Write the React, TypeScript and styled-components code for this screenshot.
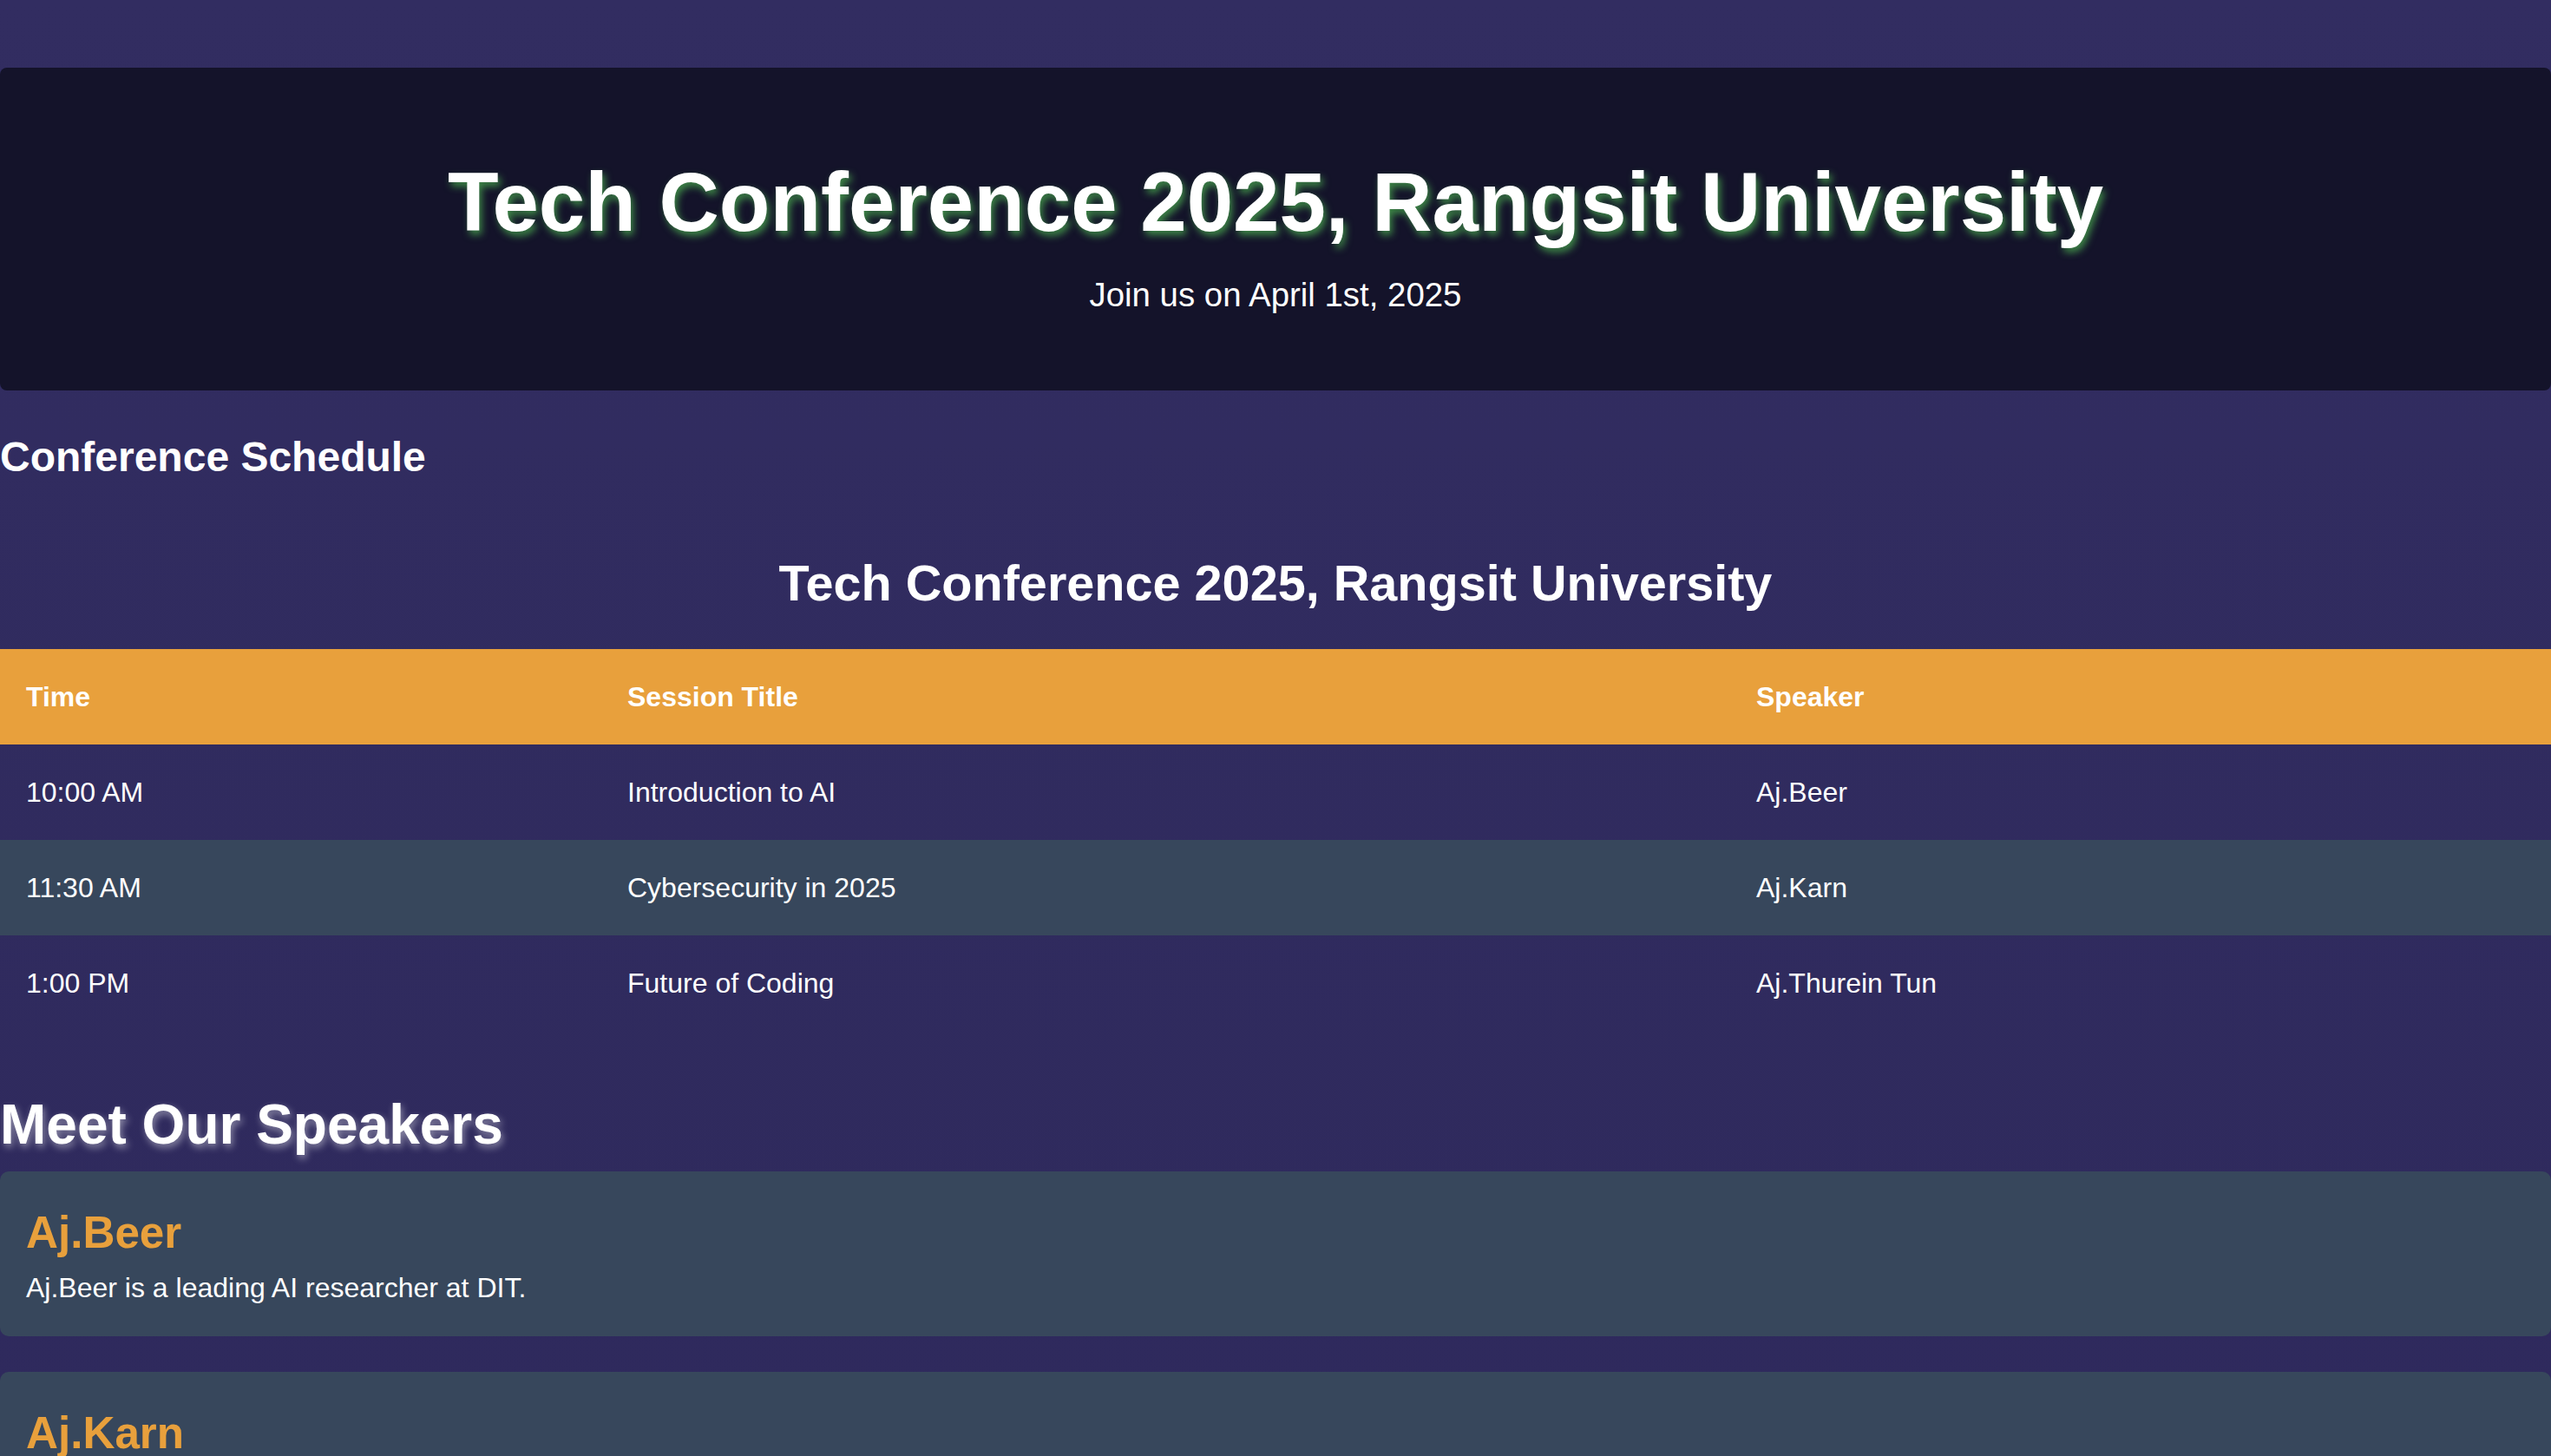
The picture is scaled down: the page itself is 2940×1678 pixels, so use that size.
import React from "react";
import styled, { createGlobalStyle } from "styled-components";

const GlobalStyle = createGlobalStyle`
  html, body {
    margin: 0;
    padding: 0;
  }
  body {
    background: #2f2a5e;
    font-family: "Liberation Sans", Arial, sans-serif;
    color: #ffffff;
  }
`;

const Page = styled.div`
  min-height: 100vh;
  background: linear-gradient(180deg, #322d61 0%, #2e295c 100%);
  padding-top: 78px;
  box-sizing: border-box;
`;

const Hero = styled.header`
  background: #14132a;
  border-radius: 8px;
  padding: 100px 0 87px;
  display: flex;
  flex-direction: column;
  align-items: center;
  text-align: center;
`;

const HeroTitle = styled.h1`
  margin: 0 0 30px;
  font-size: 96px;
  line-height: 1.15;
  font-weight: 700;
  color: #ffffff;
  text-shadow: 3px 5px 9px rgba(76, 175, 80, 0.75);
`;

const HeroSub = styled.p`
  margin: 0;
  font-size: 38.4px;
  line-height: 1.15;
  color: #ffffff;
`;

const SectionTitle = styled.h2<{ $size: number; $glow?: boolean; $center?: boolean }>`
  margin: 0;
  font-size: ${(p) => p.$size}px;
  line-height: 1.15;
  font-weight: 700;
  color: #ffffff;
  text-align: ${(p) => (p.$center ? "center" : "left")};
  text-shadow: ${(p) => (p.$glow ? "2px 4px 9px rgba(255, 255, 255, 0.45)" : "none")};
`;

const ScheduleSection = styled.section`
  margin-top: 49px;
  display: flex;
  flex-direction: column;
`;

const TableHeading = styled(SectionTitle)`
  margin-top: 85px;
  margin-bottom: 43px;
`;

const Table = styled.table`
  width: 100%;
  border-collapse: collapse;
  table-layout: fixed;
`;

const HeadRow = styled.tr`
  background: #e8a03c;
`;

const BodyRow = styled.tr<{ $alt: boolean }>`
  background: ${(p) => (p.$alt ? "#37475c" : "transparent")};
`;

const HeadCell = styled.th`
  text-align: left;
  padding: 37px 30px;
  font-size: 32px;
  line-height: 36px;
  font-weight: 700;
  color: #ffffff;
`;

const Cell = styled.td`
  text-align: left;
  padding: 37px 30px;
  font-size: 32px;
  line-height: 36px;
  font-weight: 400;
  color: #ffffff;
`;

const SpeakersSection = styled.section`
  margin-top: 72px;
  display: flex;
  flex-direction: column;
  gap: 41px;
`;

const SpeakersHeading = styled(SectionTitle)`
  margin-bottom: -25px;
`;

const Card = styled.article`
  background: #37475c;
  border-radius: 10px;
  padding: 42px 30px 37px;
  display: flex;
  flex-direction: column;
  gap: 16px;
`;

const SpeakerName = styled.h3`
  margin: 0;
  font-size: 51.2px;
  line-height: 1.15;
  font-weight: 700;
  color: #e8a03c;
`;

const SpeakerBio = styled.p`
  margin: 0;
  font-size: 32px;
  line-height: 1.15;
  color: #ffffff;
`;

const schedule = [
  { time: "10:00 AM", title: "Introduction to AI", speaker: "Aj.Beer" },
  { time: "11:30 AM", title: "Cybersecurity in 2025", speaker: "Aj.Karn" },
  { time: "1:00 PM", title: "Future of Coding", speaker: "Aj.Thurein Tun" },
];

const speakers = [
  { name: "Aj.Beer", bio: "Aj.Beer is a leading AI researcher at DIT." },
  { name: "Aj.Karn", bio: "Aj.Karn is a cybersecurity expert at DIT." },
  { name: "Aj.Thurein Tun", bio: "Aj.Thurein Tun is a software engineering lecturer at DIT." },
];

export default function App() {
  return (
    <>
      <GlobalStyle />
      <Page>
        <Hero>
          <HeroTitle>Tech Conference 2025, Rangsit University</HeroTitle>
          <HeroSub>Join us on April 1st, 2025</HeroSub>
        </Hero>

        <ScheduleSection>
          <SectionTitle $size={48}>Conference Schedule</SectionTitle>
          <TableHeading $size={57.6} $center>
            Tech Conference 2025, Rangsit University
          </TableHeading>
          <Table>
            <colgroup>
              <col style={{ width: 693 }} />
              <col style={{ width: 1301 }} />
              <col />
            </colgroup>
            <thead>
              <HeadRow>
                <HeadCell>Time</HeadCell>
                <HeadCell>Session Title</HeadCell>
                <HeadCell>Speaker</HeadCell>
              </HeadRow>
            </thead>
            <tbody>
              {schedule.map((s, i) => (
                <BodyRow key={s.time} $alt={i % 2 === 1}>
                  <Cell>{s.time}</Cell>
                  <Cell>{s.title}</Cell>
                  <Cell>{s.speaker}</Cell>
                </BodyRow>
              ))}
            </tbody>
          </Table>
        </ScheduleSection>

        <SpeakersSection>
          <SpeakersHeading $size={64} $glow>
            Meet Our Speakers
          </SpeakersHeading>
          {speakers.map((sp) => (
            <Card key={sp.name}>
              <SpeakerName>{sp.name}</SpeakerName>
              <SpeakerBio>{sp.bio}</SpeakerBio>
            </Card>
          ))}
        </SpeakersSection>
      </Page>
    </>
  );
}
